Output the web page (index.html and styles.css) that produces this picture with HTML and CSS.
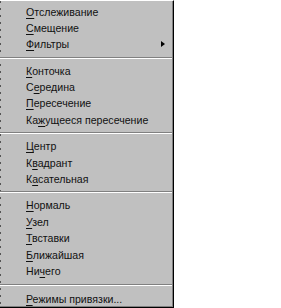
FILE: index.html
```html
<!DOCTYPE html>
<html lang="ru">
<head>
    <meta charset="UTF-8">
    <title>Привязка</title>
    <link rel="stylesheet" href="styles.css">
</head>
<body>
    <div class="menu">
        <ul class="menu-list">
            <li class="item"><span><u>О</u>тслеживание</span></li>
            <li class="item"><span><u>С</u>мещение</span></li>
            <li class="item has-sub"><span><u>Ф</u>ильтры</span><i class="arrow"></i></li>
            <li class="sep"></li>
            <li class="item"><span><u>К</u>онточка</span></li>
            <li class="item"><span>С<u>е</u>редина</span></li>
            <li class="item"><span><u>П</u>ересечение</span></li>
            <li class="item"><span>Ка<u>ж</u>ущееся пересечение</span></li>
            <li class="sep"></li>
            <li class="item"><span><u>Ц</u>ентр</span></li>
            <li class="item"><span>К<u>в</u>адрант</span></li>
            <li class="item"><span>К<u>а</u>сательная</span></li>
            <li class="sep"></li>
            <li class="item"><span><u>Н</u>ормаль</span></li>
            <li class="item"><span><u>У</u>зел</span></li>
            <li class="item"><span><u>Т</u>вставки</span></li>
            <li class="item"><span><u>Б</u>лижайшая</span></li>
            <li class="item"><span>Ни<u>ч</u>его</span></li>
            <li class="sep sep-last"></li>
            <li class="item"><span><u>Р</u>ежимы привязки...</span></li>
        </ul>
    </div>
</body>
</html>
```

FILE: styles.css
```css
body {
    margin: 0;
    background-color: #fff;
    font-family: "Liberation Sans", Arial, sans-serif;
    font-size: 10.6px;
    color: #111;
}

.menu {
    width: 174px;
    height: 308px;
    box-sizing: border-box;
    border-top: 1px solid #fff;
    border-right: 1px solid #000;
    border-bottom: 1px solid #000;
    box-shadow: inset -1px -1px 0 #808080;
    background:
        repeating-linear-gradient(to bottom, #555 0 2px, transparent 2px 7px) left top / 1px 100% no-repeat,
        #c0c0c0;
    padding-top: 2.5px;
}

.menu-list {
    list-style: none;
    margin: 0;
    padding: 0;
}

.item {
    display: flex;
    justify-content: space-between;
    align-items: center;
    height: 16.4px;
    line-height: 16.4px;
    padding: 0 8px 0 26px;
    white-space: nowrap;
}

.item u {
    text-decoration-thickness: 1px;
    text-underline-offset: 2px;
}

.arrow {
    width: 0;
    height: 0;
    border-left: 4px solid #000;
    border-top: 3.5px solid transparent;
    border-bottom: 3.5px solid transparent;
}

.sep {
    height: 10px;
    display: flex;
    flex-direction: column;
    justify-content: center;
    padding-right: 1px;
}

.sep::before {
    content: "";
    display: block;
    border-top: 1px solid #808080;
    border-bottom: 1px solid #fff;
}

.sep-last {
    height: 11.5px;
}
```
